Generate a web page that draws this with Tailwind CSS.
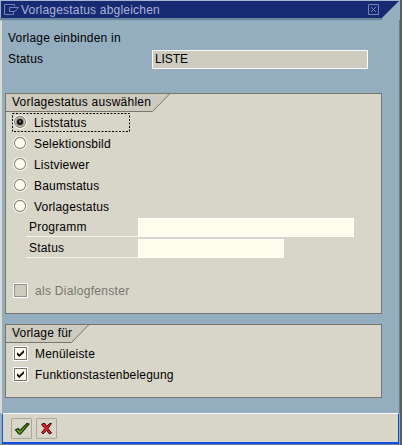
<!DOCTYPE html>
<html lang="de">
<head>
<meta charset="utf-8">
<title>Vorlagestatus abgleichen</title>
<script src="https://cdn.jsdelivr.net/npm/@tailwindcss/browser@4"></script>
</head>
<body class="w-[402px] h-[445px] overflow-hidden bg-[#c6c3b6] font-['Liberation_Sans',Arial,sans-serif] text-[12px] leading-[21px] tracking-[0.2px] text-black">
<svg class="hidden">
  <symbol id="radio" viewBox="0 0 14 14"><circle cx="7" cy="7" r="7" fill="#fffff5"/><circle cx="7" cy="7" r="5.6" fill="#fcfded" stroke="#85857c" stroke-width="1.1"/></symbol>
  <symbol id="tick" viewBox="0 0 15 15"><path d="M.5.5h14v14H.5z" fill="#fcfded" stroke="#fff"/><path d="M1.5 1.5h12v12h-12z" fill="#fcfded" stroke="#74736b"/><path d="M4 6.2l2.3 2.2L11 4v2.4L6.3 11 4 8.8z" fill="#000"/></symbol>
</svg>
<main class="flex h-[445px] w-[402px] flex-col border-r-2 border-[#5e5e58] bg-[#94aec0]">
  <header class="relative h-[20px] shrink-0 border-t border-[#a9b4d0]">
    <svg class="absolute left-0 top-0" width="400" height="20"><path d="M0 18h382" stroke="#66869a" stroke-width="2"/><path d="M0 20h382" stroke="#829eb0"/><path d="M1 0H399L382 17H1z" fill="#182a73"/><path d="M399 0L382 17" stroke="#5d7b98" fill="none"/>
      <g fill="none" stroke="#7582b4"><path d="M14.500 5.500V3.500H4.500V13.500H13.500V11.500"/><path d="M9.500 6.500H18.500L15 10.500H9.500z"/><path d="M368.500 3.500h10v10h-10z"/><path d="M371 6l5 5M376 6l-5 5"/></g></svg>
    <h1 class="relative pl-[21px] leading-[19px] text-[#a9b4d6]">Vorlagestatus abgleichen</h1>
  </header>
  <div class="flex grow flex-col border-l-2 border-r border-l-[#d9dcd5] border-r-[#66808f]">
    <section class="h-[73px] shrink-0 pl-[6px] pt-[8px]">
      <p>Vorlage einbinden in</p>
      <div class="flex pt-px"><span class="w-[144px] leading-[19px]">Status</span><div class="h-[19px] w-[216px] border border-white bg-[#cccbbe] pl-[2px] leading-[17px] tracking-[-0.1px]">LISTE</div></div>
    </section>
    <section class="relative ml-[3px] h-[221px] w-[377px] shrink-0 border border-[#77756c] bg-[#d8d6c8]">
      <svg class="absolute -left-px -top-px" width="170" height="20"><path d="M1 1H164.500L147.500 18.500H1z" fill="#cccbbe"/><path d="M0 18.500H147.500L165 .5H0" fill="none" stroke="#77756c"/></svg>
      <h2 class="relative h-[18px] pl-[6px] leading-[17px] tracking-[0.25px]">Vorlagestatus auswählen</h2>
      <div class="flex flex-col pl-[7px]">
        <label class="relative flex h-[21px] gap-[7px]"><svg class="mt-[3px] h-[14px] w-[14px]"><use href="#radio"/><circle cx="7" cy="7" r="4.700" fill="#96968e"/><circle cx="7" cy="7" r="3" fill="#111"/><path d="M6 5.500h2v2H6z" fill="#777"/></svg><span class="leading-[22px]">Liststatus</span><svg class="absolute -left-px top-px" width="119" height="20"><path d="M.5.5h117v18H.5z" fill="none" stroke="#000" stroke-dasharray="2 1.500"/></svg></label>
        <label class="flex h-[21px] gap-[7px]"><svg class="mt-[3px] h-[14px] w-[14px]"><use href="#radio"/></svg><span class="leading-[22px]">Selektionsbild</span></label>
        <label class="flex h-[21px] gap-[7px]"><svg class="mt-[3px] h-[14px] w-[14px]"><use href="#radio"/></svg><span class="leading-[22px]">Listviewer</span></label>
        <label class="flex h-[21px] gap-[7px]"><svg class="mt-[3px] h-[14px] w-[14px]"><use href="#radio"/></svg><span class="leading-[22px]">Baumstatus</span></label>
        <label class="flex h-[21px] gap-[7px]"><svg class="mt-[3px] h-[14px] w-[14px]"><use href="#radio"/></svg><span class="leading-[22px]">Vorlagestatus</span></label>
      </div>
      <div class="flex flex-col gap-[2px] pl-[20px] pt-px">
        <div class="flex h-[19px]"><span class="w-[112px] border-b border-[#f3f2e6] pl-[3px] leading-[19px]">Programm</span><div class="w-[216px] border border-white bg-[#fcfdec]"></div></div>
        <div class="flex h-[19px]"><span class="w-[112px] border-b border-[#f3f2e6] pl-[3px] leading-[19px]">Status</span><div class="w-[146px] border border-white bg-[#fcfdec]"></div></div>
      </div>
      <label class="flex gap-[7px] pl-[7px] pt-[24px] tracking-[0.3px] text-[#77766d]"><span class="mt-px h-[15px] w-[15px] border border-white"><span class="block h-[13px] w-[13px] border border-[#918f86] bg-[#cccbbe]"></span></span><span class="leading-[19px]">als Dialogfenster</span></label>
    </section>
    <section class="relative ml-[3px] mt-[10px] h-[74px] w-[377px] shrink-0 border border-[#77756c] bg-[#d8d6c8]">
      <svg class="absolute -left-px -top-px" width="90" height="20"><path d="M1 1H84L66 18.500H1z" fill="#cccbbe"/><path d="M0 18.500H66.500L84 .5H0" fill="none" stroke="#77756c"/></svg>
      <h2 class="relative h-[18px] pl-[6px] leading-[17px]">Vorlage für</h2>
      <div class="flex flex-col pl-[7px]">
        <label class="flex h-[21px] gap-[7px]"><svg class="mt-[3px] h-[15px] w-[15px]"><use href="#tick"/></svg><span class="leading-[22px]">Menüleiste</span></label>
        <label class="flex h-[21px] gap-[7px]"><svg class="mt-[3px] h-[15px] w-[15px]"><use href="#tick"/></svg><span class="leading-[22px]">Funktionstastenbelegung</span></label>
      </div>
    </section>
  </div>
  <footer class="h-[32px] shrink-0 border-b border-[#66808f] pl-[2px]">
    <div class="flex h-[31px] w-[397px] gap-[4px] border-x border-b-2 border-t border-b-[#1050e0] border-l-[#1055f0] border-r-[#1040d8] border-t-white bg-[#d8d6c8] pl-[8px] pt-[4px]">
      <button class="h-[21px] w-[21px] rounded-[1px] border border-[#aaa89d]"><svg width="19" height="19"><path d="M3.500 11L6 9.500l2 2 7-7 2 .5L8.500 15H7z" fill="#67aa18" stroke="#173500" stroke-width="1.200"/></svg></button>
      <button class="h-[21px] w-[21px] rounded-[1px] border border-[#aaa89d]"><svg width="19" height="19"><path d="M4.500 5.500L6 4.500h2l1.500 3 3-3h2l-3.500 5 3.500 4.500-2 1-3-3.500L6 15l-1.500-1.500L8 9.500z" fill="#e51d24" stroke="#3c0808"/></svg></button>
    </div>
  </footer>
</main>
</body>
</html>
